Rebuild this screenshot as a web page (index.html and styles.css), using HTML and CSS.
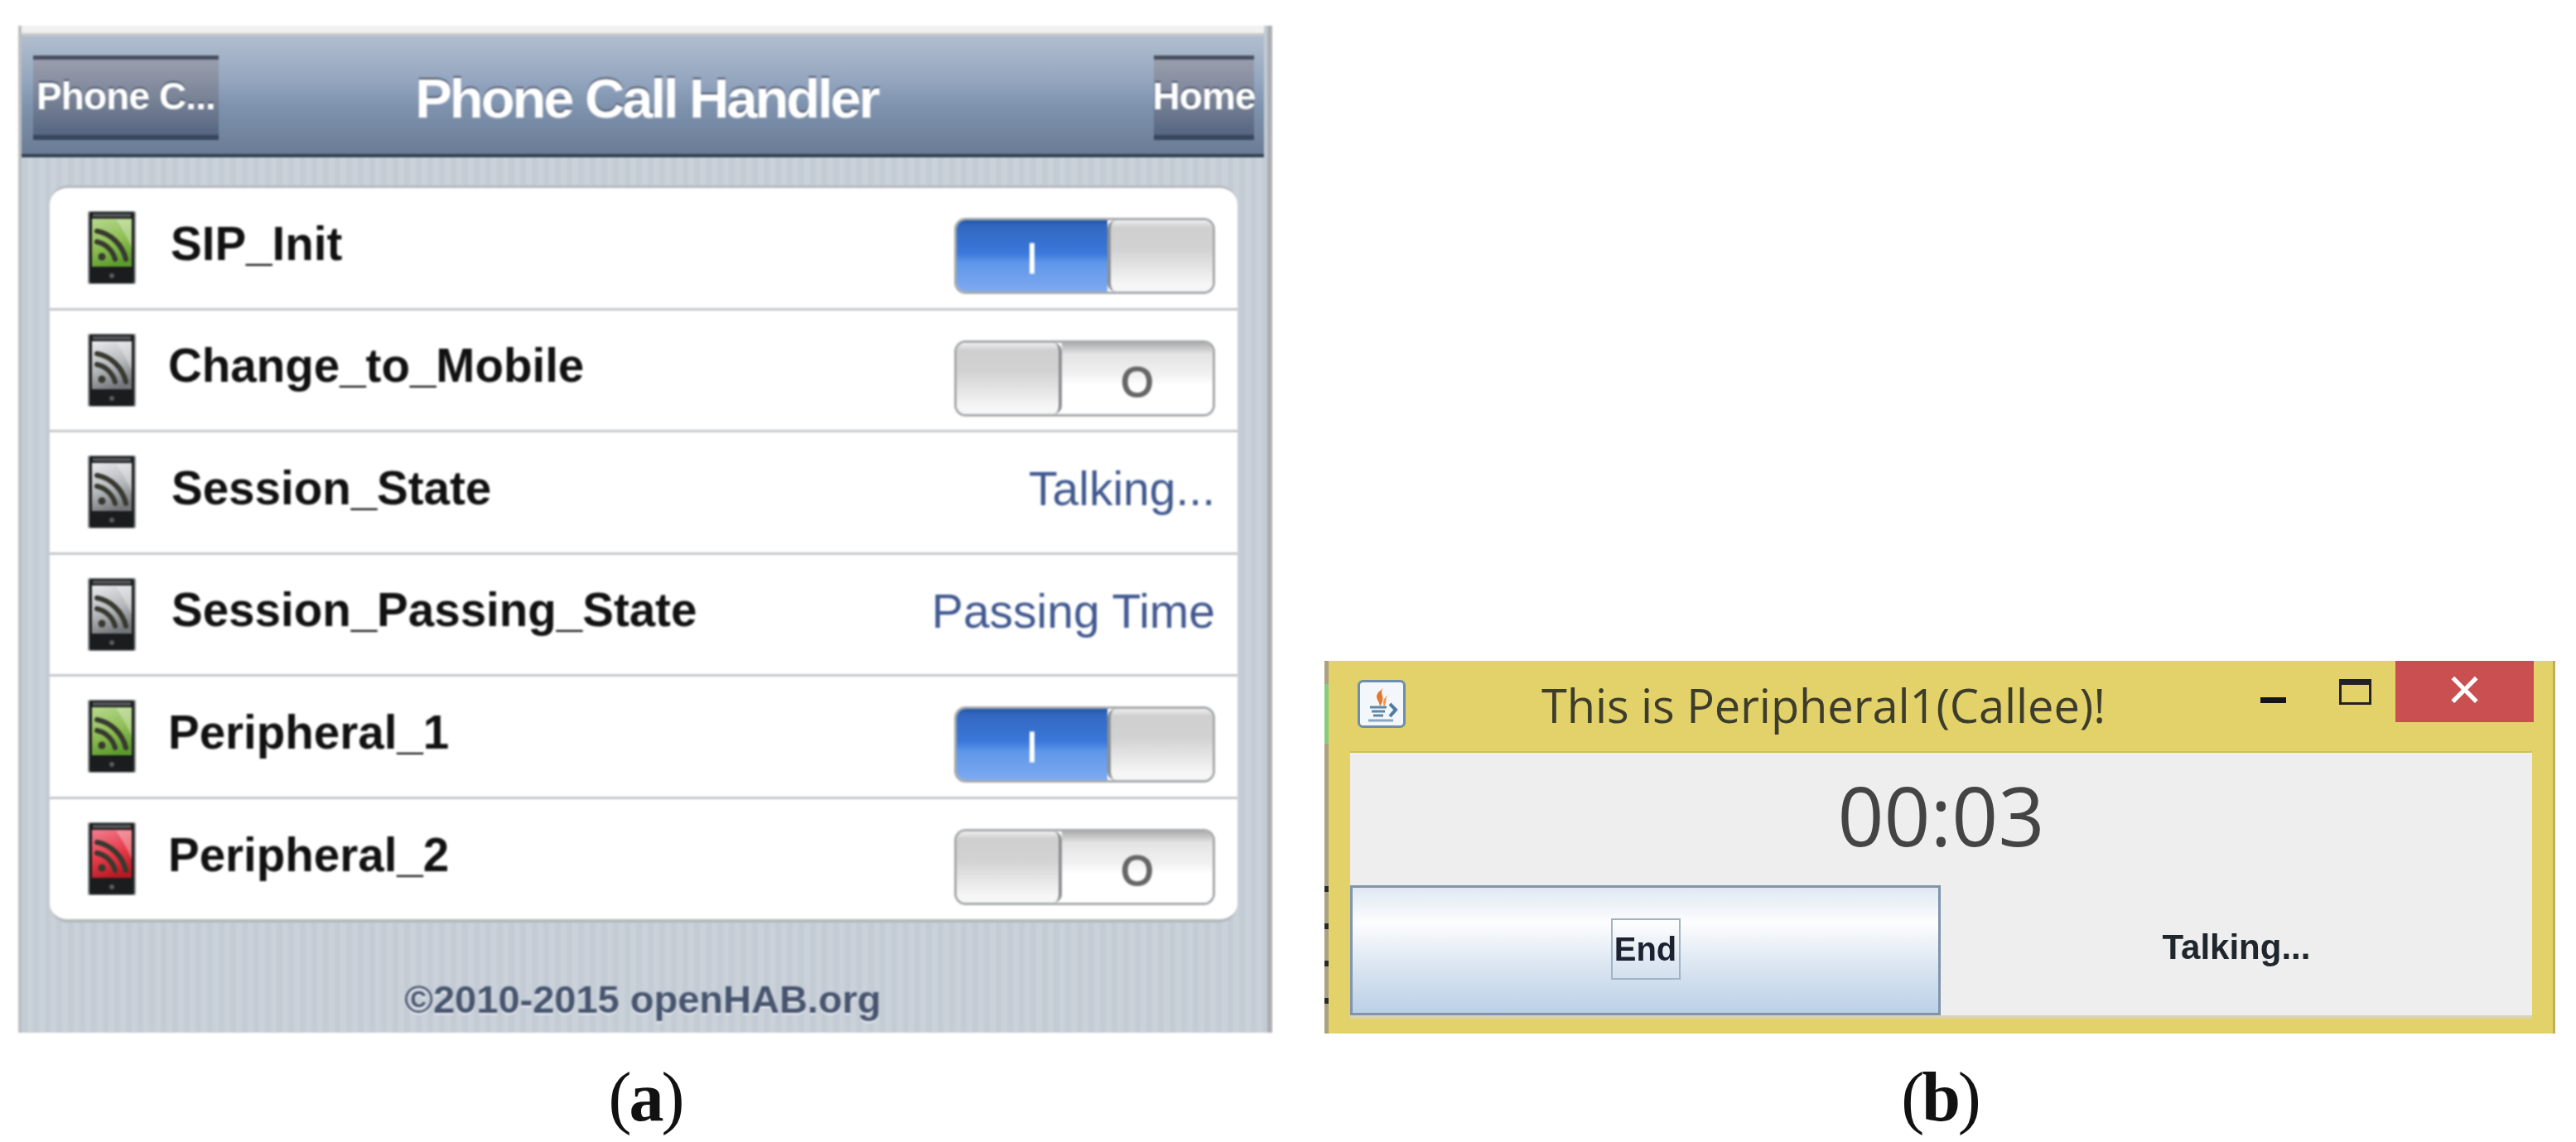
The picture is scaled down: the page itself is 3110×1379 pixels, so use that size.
FILE: index.html
```html
<!DOCTYPE html>
<html lang="en">
<head>
  <meta charset="UTF-8">
  <title>Phone Call Handler</title>
  <link rel="stylesheet" href="styles.css">
</head>
<body>
<svg class="defs" width="0" height="0">
  <defs>
    <linearGradient id="screen-green" x1="0.2" y1="0" x2="0.5" y2="1">
      <stop offset="0" stop-color="#b4d68a"/>
      <stop offset="0.55" stop-color="#8dbd52"/>
      <stop offset="1" stop-color="#5c9a2e"/>
    </linearGradient>
    <linearGradient id="screen-gray" x1="0.2" y1="0" x2="0.5" y2="1">
      <stop offset="0" stop-color="#e4e6e8"/>
      <stop offset="0.55" stop-color="#b4b7ba"/>
      <stop offset="1" stop-color="#73777b"/>
    </linearGradient>
    <linearGradient id="screen-red" x1="0.2" y1="0" x2="0.5" y2="1">
      <stop offset="0" stop-color="#f0788a"/>
      <stop offset="0.55" stop-color="#e63a48"/>
      <stop offset="1" stop-color="#b51a22"/>
    </linearGradient>
    <symbol id="phone-body" viewBox="0 0 58 88">
      <rect x="0" y="0" width="58" height="88" rx="2" fill="#8d9092"/>
      <rect x="2" y="1" width="54" height="86" rx="2" fill="#1b1c1e"/>
      <rect x="6" y="3" width="46" height="4" fill="#55585a"/>
      <circle cx="29" cy="78" r="3" fill="#5a5d60"/>
    </symbol>
    <symbol id="phone-waves" viewBox="0 0 58 88">
      <path d="M34 10 L53 10 L53 44 Q44 24 34 10Z" fill="#fff" opacity="0.3"/>
      <g fill="none" stroke="#37392f" stroke-width="6" stroke-linecap="round">
        <path d="M11 24 C28 27 42 41 46 58"/>
        <path d="M11 37 C21 39 30 47 33 58"/>
      </g>
      <circle cx="17" cy="55" r="4.5" fill="#37392f"/>
    </symbol>
  </defs>
</svg>

<main class="page">
  <figure class="figure figure-a">
    <div class="phone-shot">
      <header class="topbar">
        <a class="bar-btn btn-back">Phone C...</a>
        <h1 class="bar-title">Phone Call Handler</h1>
        <a class="bar-btn btn-home">Home</a>
      </header>

      <ul class="card">
        <li class="row">
          <svg class="phone-icon" viewBox="0 0 58 88"><use href="#phone-body"/><rect x="5" y="9" width="48" height="58" fill="url(#screen-green)"/><use href="#phone-waves"/></svg>
          <span class="row-label">SIP_Init</span>
          <div class="toggle">
            <span class="toggle-on">I</span>
            <span class="toggle-knob knob-right"></span>
          </div>
        </li>
        <li class="row">
          <svg class="phone-icon" viewBox="0 0 58 88"><use href="#phone-body"/><rect x="5" y="9" width="48" height="58" fill="url(#screen-gray)"/><use href="#phone-waves"/></svg>
          <span class="row-label label-near">Change_to_Mobile</span>
          <div class="toggle">
            <span class="toggle-knob knob-left"></span>
            <span class="toggle-off">O</span>
          </div>
        </li>
        <li class="row">
          <svg class="phone-icon" viewBox="0 0 58 88"><use href="#phone-body"/><rect x="5" y="9" width="48" height="58" fill="url(#screen-gray)"/><use href="#phone-waves"/></svg>
          <span class="row-label label-far">Session_State</span>
          <span class="row-value">Talking...</span>
        </li>
        <li class="row">
          <svg class="phone-icon" viewBox="0 0 58 88"><use href="#phone-body"/><rect x="5" y="9" width="48" height="58" fill="url(#screen-gray)"/><use href="#phone-waves"/></svg>
          <span class="row-label label-far">Session_Passing_State</span>
          <span class="row-value">Passing Time</span>
        </li>
        <li class="row">
          <svg class="phone-icon" viewBox="0 0 58 88"><use href="#phone-body"/><rect x="5" y="9" width="48" height="58" fill="url(#screen-green)"/><use href="#phone-waves"/></svg>
          <span class="row-label label-near">Peripheral_1</span>
          <div class="toggle">
            <span class="toggle-on">I</span>
            <span class="toggle-knob knob-right"></span>
          </div>
        </li>
        <li class="row">
          <svg class="phone-icon" viewBox="0 0 58 88"><use href="#phone-body"/><rect x="5" y="9" width="48" height="58" fill="url(#screen-red)"/><use href="#phone-waves"/></svg>
          <span class="row-label label-near">Peripheral_2</span>
          <div class="toggle">
            <span class="toggle-knob knob-left"></span>
            <span class="toggle-off">O</span>
          </div>
        </li>
      </ul>

      <footer class="copyright">©2010-2015 openHAB.org</footer>
    </div>
    <figcaption class="caption">(<b>a</b>)</figcaption>
  </figure>

  <figure class="figure figure-b">
    <div class="window">
      <div class="titlebar">
        <svg class="java-icon" viewBox="0 0 58 58">
          <rect x="1.5" y="1.5" width="55" height="55" rx="5" fill="#f3f6fa" stroke="#6f8dab" stroke-width="3"/>
          <path d="M32 9 C24 16 36 20 27 32 C26 24 20 22 25 15 Z" fill="#e2782c"/>
          <path d="M37 18 C32 22 37 26 32 32 C30 27 31 22 37 18 Z" fill="#ee9a52"/>
          <path d="M15 33 H35 M17 38 H33 M19 43 H31" stroke="#5d86a8" stroke-width="3" fill="none"/>
          <path d="M39 29 L46 36 L39 44" stroke="#4f7ca3" stroke-width="4" fill="none"/>
          <path d="M13 49 H43" stroke="#8aa6bf" stroke-width="3"/>
        </svg>
        <span class="window-title">This is Peripheral1(Callee)!</span>
        <div class="window-controls">
          <span class="ctl-min"></span>
          <span class="ctl-max"></span>
          <span class="ctl-close">×</span>
        </div>
      </div>
      <div class="window-body">
        <div class="clock">00:03</div>
        <div class="action-row">
          <button class="end-btn"><span class="end-focus">End</span></button>
          <div class="status">Talking...</div>
        </div>
      </div>
    </div>
    <figcaption class="caption">(<b>b</b>)</figcaption>
  </figure>
</main>
</body>
</html>
```

FILE: styles.css
```css
* {
  margin: 0;
  padding: 0;
  box-sizing: border-box;
}

body {
  background: white;
  font-family: "Liberation Sans", Arial, sans-serif;
  overflow: hidden;
}

.defs {
  display: block;
  height: 0;
}

.page {
  display: flex;
  align-items: flex-start;
  padding-left: 22px;
}

.figure-a {
  width: 1514px;
  padding-top: 31px;
}

.figure-b {
  width: 1486px;
  margin-left: 63px;
  padding-top: 798px;
}

.caption {
  font-family: "Liberation Serif", serif;
  font-size: 84px;
  letter-spacing: -3px;
  line-height: 96px;
  text-align: center;
  color: #111;
  margin-top: 30px;
}

.figure-b .caption {
  margin-top: 29px;
}

/* left screenshot */
.phone-shot {
  height: 1216px;
  padding-right: 4px;
  border-left: 4px solid #bcbfc2;
  border-right: 6px solid #acafb2;
  background: repeating-linear-gradient(90deg, #c3ccd5 0 7px, #cad1d9 7px 14px);
  filter: blur(1px);
}

.topbar {
  display: flex;
  align-items: center;
  height: 159px;
  padding: 10px 12px 0 14px;
  border-top: 9px solid #f1f1f1;
  border-bottom: 4px solid #303f52;
  background: linear-gradient(to bottom, #c8c8c8 0 3px, #b2becf 3px, #93a5bf 40%, #7f93ae 60%, #6b7c95);
}

.bar-btn {
  display: flex;
  align-items: center;
  justify-content: center;
  height: 102px;
  padding-bottom: 4px;
  color: white;
  font-size: 46px;
  font-weight: bold;
  letter-spacing: -0.9px;
  text-shadow: 0 -2px 1px #4a5469;
  border-top: 5px solid #484f60;
  border-bottom: 6px solid #36465c;
  background: linear-gradient(to bottom, #9a9eae, #7d8799 45%, #566681);
}

.btn-back {
  width: 224px;
}

.btn-home {
  width: 121px;
}

.bar-title {
  flex: 1;
  text-align: center;
  color: white;
  font-size: 67px;
  letter-spacing: -3.1px;
  text-shadow: 0 -2px 1px #4a5469;
  padding-right: 96px;
}

.card {
  list-style: none;
  margin: 34px 32px 0 34px;
  background: white;
  border-radius: 22px;
  border-top: 3px solid #b4b9bd;
  border-bottom: 4px solid #b4b9bd;
}

.row {
  display: flex;
  align-items: center;
  height: 147.5px;
  padding: 0 27px 0 46px;
  border-bottom: 3px solid #c6c8ca;
}

.row:last-child {
  height: 145px;
  border-bottom: 0;
}

.phone-icon {
  width: 58px;
  height: 88px;
  flex-shrink: 0;
}

.row-label {
  margin-left: 42px;
  margin-bottom: 10px;
  font-size: 56.5px;
  font-weight: bold;
  color: #111;
}

.label-near {
  margin-left: 39px;
}

.label-far {
  margin-left: 43px;
}

.row-value {
  margin-left: auto;
  margin-bottom: 8px;
  font-size: 57px;
  color: #40598f;
}

.toggle {
  display: flex;
  width: 315px;
  height: 92px;
  margin-left: auto;
  margin-top: 20px;
  border: 3px solid #a6a9ab;
  border-radius: 14px;
  overflow: hidden;
}

.toggle-on {
  flex: 1;
  text-align: center;
  color: white;
  font-size: 52px;
  line-height: 92px;
  -webkit-text-stroke: 1px white;
  background: linear-gradient(to bottom, #1f55a6, #3268c0 8%, #3a78da 46%, #5f97ea 60%, #7eaaf0);
}

.toggle-off {
  flex: 1;
  text-align: center;
  color: #666;
  font-size: 50px;
  line-height: 96px;
  -webkit-text-stroke: 2px #666;
  background: linear-gradient(to bottom, #aeaeae, #e4e4e4 16%, #f2f2f2 45%, #fff 60%);
}

.toggle-knob {
  background: linear-gradient(to bottom, #f0f0f0, #cfcfcf 10%, #d2d2d2 40%, #f6f6f6 90%);
}

.knob-right {
  width: 127px;
  border-left: 4px solid #8d8f92;
  border-radius: 10px 0 0 10px;
}

.knob-left {
  width: 127px;
  border-right: 4px solid #8d8f92;
  border-radius: 0 10px 10px 0;
}

.copyright {
  padding-top: 73px;
  text-align: center;
  font-size: 47px;
  font-weight: bold;
  line-height: 40px;
  color: #47546e;
  text-shadow: 0 2px 1px #eef2f6;
}

/* right screenshot */
.window {
  height: 450px;
  padding-left: 5px;
  background:
    repeating-linear-gradient(to bottom, #2b2b26 0 7px, transparent 7px 45px) 0 272px / 5px 178px no-repeat,
    linear-gradient(to bottom, #a9a181 0 28px, #86cc7e 28px 100px, #a9a181 100px) 0 0 / 5px 100% no-repeat,
    #e3d16a;
  border-right: 3px solid #bfae55;
  filter: blur(0.7px);
}

.titlebar {
  display: flex;
  align-items: flex-start;
  height: 109px;
  padding-left: 35px;
  padding-right: 23px;
}

.java-icon {
  width: 58px;
  height: 58px;
  margin-top: 23px;
  flex-shrink: 0;
}

.window-title {
  margin-left: 164px;
  margin-top: 17px;
  font-family: "Open Sans", sans-serif;
  font-size: 56px;
  line-height: 72px;
  letter-spacing: -0.1px;
  color: #3d3d2c;
  white-space: nowrap;
}

.window-controls {
  display: flex;
  align-items: flex-start;
  margin-left: auto;
}

.ctl-min {
  width: 31px;
  height: 7px;
  margin-top: 44px;
  background: #14141c;
}

.ctl-max {
  width: 39px;
  height: 31px;
  margin-top: 22px;
  margin-left: 64px;
  border: 3px solid #222;
  border-top-width: 7px;
}

.ctl-close {
  width: 167px;
  height: 74px;
  margin-left: 29px;
  text-align: center;
  color: white;
  font-size: 72px;
  line-height: 68px;
  background: #c94f50;
}

.window-body {
  height: 323px;
  margin: 0 25px 0 26px;
  background: #eeeeee;
  border-top: 2px solid #cfbd58;
  border-bottom: 4px solid #d8d3b4;
}

.clock {
  height: 160px;
  font-family: "Open Sans", sans-serif;
  font-size: 98px;
  line-height: 150px;
  text-align: center;
  color: #444;
}

.action-row {
  display: flex;
  height: 157px;
}

.end-btn {
  display: flex;
  align-items: center;
  justify-content: center;
  width: 713px;
  padding-bottom: 4px;
  border: 3px solid #7f95ad;
  background: linear-gradient(to bottom, #dfe8f2, #fdfdfe 28%, #dbe6f1 62%, #bcd0e6);
}

.end-focus {
  width: 84px;
  height: 74px;
  border: 2px solid #9fb3c5;
  font-family: "Liberation Sans", sans-serif;
  font-size: 40px;
  font-weight: bold;
  line-height: 70px;
  color: #1c2230;
}

.status {
  flex: 1;
  text-align: center;
  font-size: 42px;
  font-weight: bold;
  line-height: 150px;
  color: #20262e;
}
```
